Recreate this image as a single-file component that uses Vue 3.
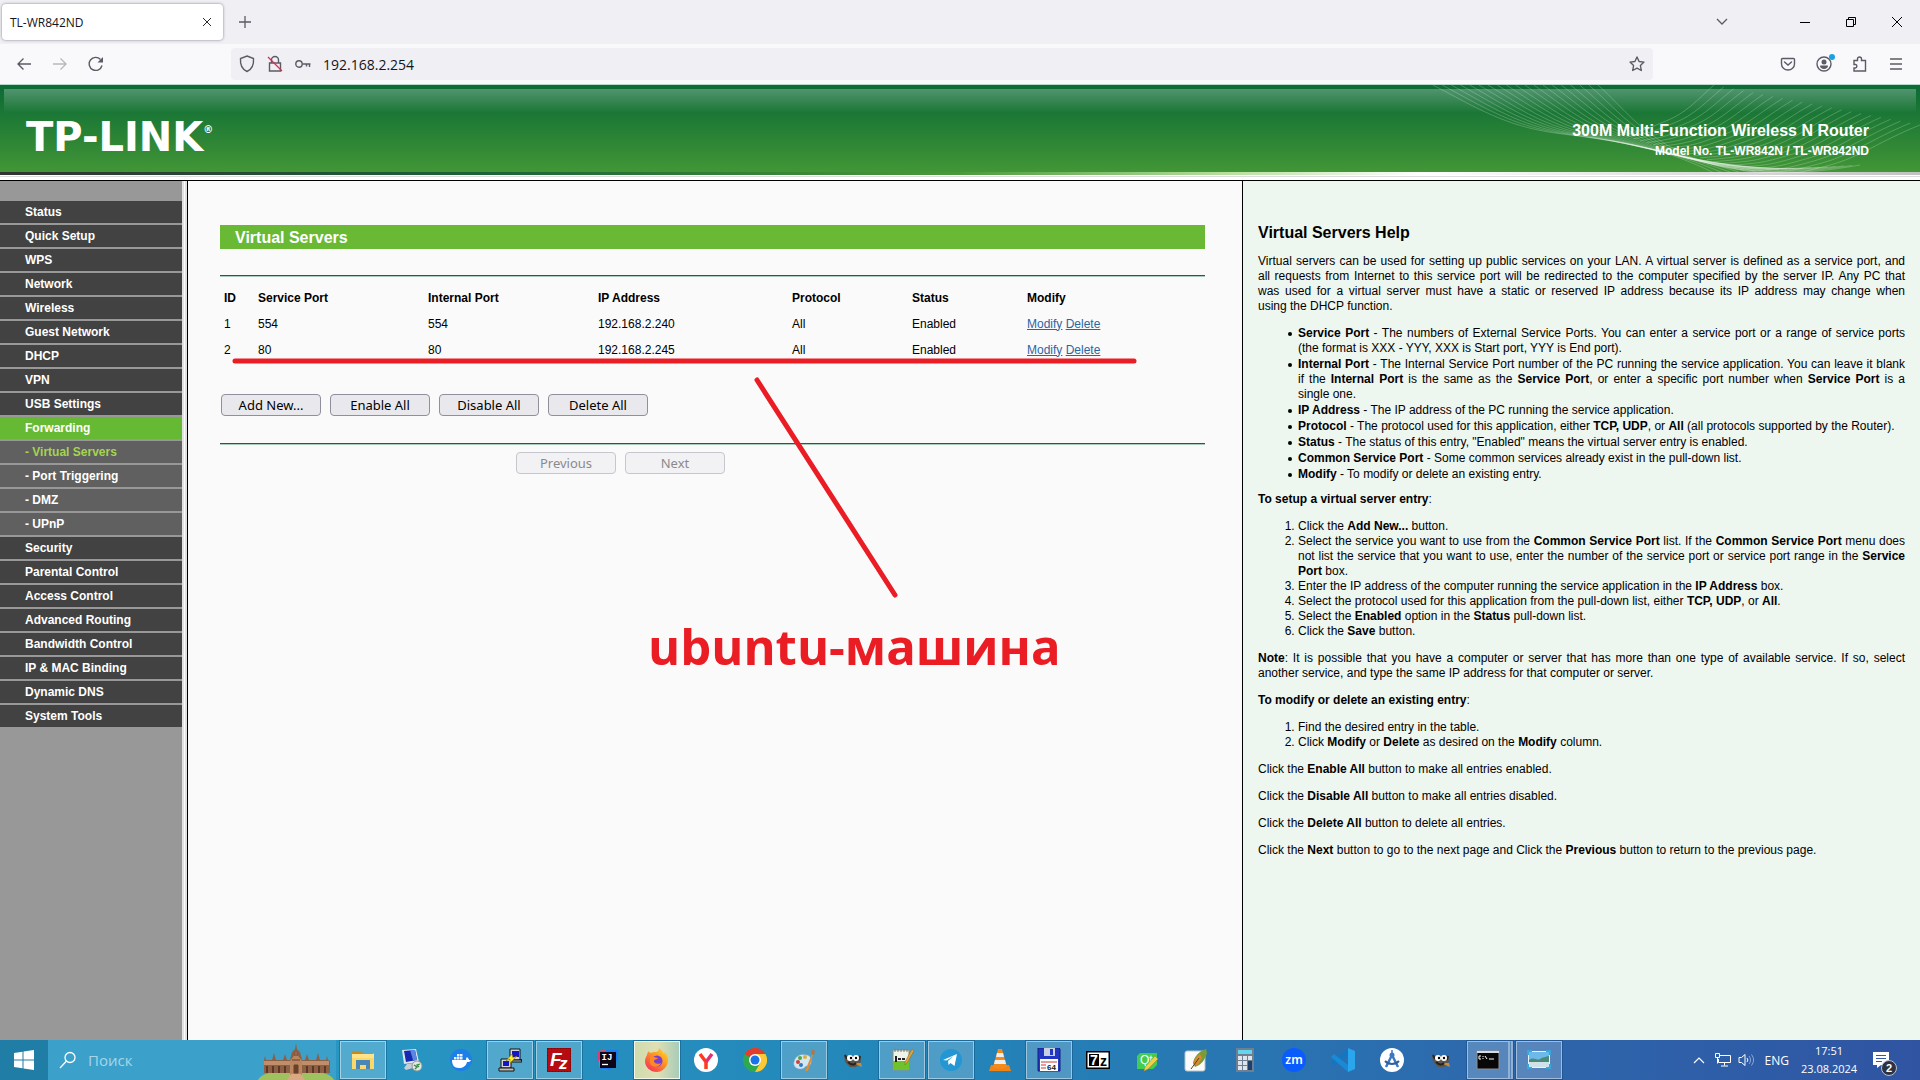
<script setup>
const menu = [
  { label: 'Status' },
  { label: 'Quick Setup' },
  { label: 'WPS' },
  { label: 'Network' },
  { label: 'Wireless' },
  { label: 'Guest Network' },
  { label: 'DHCP' },
  { label: 'VPN' },
  { label: 'USB Settings' },
  { label: 'Forwarding', kind: 'current' },
  { label: '- Virtual Servers', kind: 'sub chosen' },
  { label: '- Port Triggering', kind: 'sub' },
  { label: '- DMZ', kind: 'sub' },
  { label: '- UPnP', kind: 'sub' },
  { label: 'Security' },
  { label: 'Parental Control' },
  { label: 'Access Control' },
  { label: 'Advanced Routing' },
  { label: 'Bandwidth Control' },
  { label: 'IP & MAC Binding' },
  { label: 'Dynamic DNS' },
  { label: 'System Tools' },
]

const servers = [
  { id: 1, service: '554', internal: '554', ip: '192.168.2.240', protocol: 'All', status: 'Enabled' },
  { id: 2, service: '80', internal: '80', ip: '192.168.2.245', protocol: 'All', status: 'Enabled' },
]

// Thin wave lines in the banner, in the coordinates of a 490 x 88 drawing.
const mix = (a, b, t) => Math.round((a + (b - a) * t) * 10) / 10
function family(from, to, count) {
  const lines = []
  for (let i = 0; i < count; i++) {
    const t = i / (count - 1)
    const p = from.map((v, k) => mix(v, to[k], t))
    lines.push(`M${p[0]} ${p[1]}C${p[2]} ${p[3]} ${p[4]} ${p[5]} ${p[6]} ${p[7]}S${p[8]} ${p[9]} ${p[10]} ${p[11]}`)
  }
  return lines
}
const waves = [
  ...family(
    [3, 0, 45, 22, 75, 41, 125, 48, 225, 58, 284, 88],
    [168, 0, 190, 20, 200, 34, 222, 50, 300, 104, 430, 80],
    19,
  ),
  ...family(
    [284, 0, 266, 16, 256, 28, 236, 36, 215, 46, 190, 50],
    [490, 40, 450, 56, 430, 72, 400, 80, 370, 88, 330, 90],
    22,
  ),
]

const gimp =
  '<path d="M3 6l3 3 3-2 5 2 5-2 1 7-5 5H9l-5-5z" fill="#5f574c"/><path d="M4 7l2 4M19 8l-1 4" stroke="#2b2722" stroke-width="2"/><circle cx="9" cy="10" r="3" fill="#fff"/><circle cx="15" cy="10" r="3" fill="#fff"/><circle cx="10" cy="10" r="1.2"/><circle cx="15" cy="10" r="1.2"/><path d="M12 15l9 4-1-4z" fill="#c98b3c"/><path d="M7 14c3 3 6 3 8 1" stroke="#26221e" fill="none" stroke-width="2"/>'

const apps = [
  { name: 'File Explorer', open: true, art: '<path d="M1 3h9l2 2v3H1z" fill="#c78a1c"/><path d="M1 6h21l1-1v16H1z" fill="#f9d86c"/><path d="M1 6h22v4H1z" fill="#ffe38c"/><path d="M5 21v-9h14v9h-4v-4H9v4z" fill="#4b86b5"/>' },
  { name: 'Remote Desktop', art: '<path d="M2 2l14-1 3 13-15 2z" fill="#dfe4ea"/><path d="M4 3l11-1 2 10-11 2z" fill="#1428b4"/><path d="M10 2l5 0 2 10-4 0z" fill="#5a86e0"/><path d="M7 16l7-1 2 4-10 3-2-2z" fill="#c9ced4"/><circle cx="17" cy="18" r="5" fill="#e4e6e5" stroke="#8f9794"/><path d="M14 17l3 2-2 2M20 16l-3 1 2 2" stroke="#2d8b3e" stroke-width="1.300" fill="none"/>' },
  { name: 'Docker', art: '<circle cx="12" cy="12" r="11" fill="#1d7fe8"/><path d="M3 12h14c0-1 0-2 1-3 1 1 2 2 2 3h2c-1 2-2 2-4 2-1 4-4 6-8 6-5 0-7-3-7-8z" fill="#fff"/><path d="M5 9h2.500v2.500H5zM8 9h2.500v2.500H8zM11 9h2.500v2.500H11zM8 6h2.500v2.500H8zM11 6h2.500v2.500H11z" fill="#e8f2ff"/>' },
  { name: 'PuTTY', open: true, art: '<path d="M12 1h10v11H12z" fill="#d5d5d5" stroke="#111"/><path d="M14 3h7v6h-7z" fill="#1414c8"/><path d="M3 11h10v9H3z" fill="#d5d5d5" stroke="#111"/><path d="M5 13h6v5H5z" fill="#1414c8"/><path d="M1 20h15v3H1zM13 12h10v-1l1 3H14z" fill="#bdbdbd" stroke="#111"/><path d="M8 13l6-7 1 4 4-2-7 7 0-4z" fill="#ffee22" stroke="#8c7b00" stroke-width=".5"/>' },
  { name: 'FileZilla', open: true, art: '<path d="M0 0h24v24H0z" fill="#b60c10"/><path d="M.5 .5h23v23H.5z" fill="none" stroke="#7a0508" stroke-dasharray="2 1"/><text x="3" y="18" font-family="Liberation Sans" font-weight="700" font-style="italic" font-size="19" fill="#fff">F</text><text x="12" y="21" font-family="Liberation Sans" font-weight="700" font-style="italic" font-size="17" fill="#fff">z</text>' },
  { name: 'IntelliJ IDEA', art: '<path d="M2 3l9-1 1 20-8-1z" fill="#fb7a24"/><path d="M2 14l0-11 10-1z" fill="#d83b7c"/><path d="M10 2h12v10L14 22 4 21z" fill="#177cf5"/><path d="M4 4h16v16H4z" fill="#0d0616"/><text x="5.500" y="12" font-family="Liberation Mono" font-weight="700" font-size="9" fill="#fff">IJ</text><path d="M6 16.500h6" stroke="#fff" stroke-width="1.300"/>' },
  { name: 'Firefox', open: true, active: true, art: '<defs><linearGradient id="fx" x1="1" y1="0" x2="0.200" y2="1"><stop offset="0" stop-color="#ffe03a"/><stop offset=".45" stop-color="#ff9a1f"/><stop offset="1" stop-color="#f5305a"/></linearGradient></defs><path d="M2 7c0-1 1-3 2-4 0 1 1 2 2 2 1-1 3-1 4-1 2 0 4-1 4-4 3 2 4 4 5 6l1-2c3 4 4 8 2 13-2 4-6 7-10 7C5 24 0 19 0 13c0-2 1-4 2-6z" fill="url(#fx)"/><circle cx="12" cy="13" r="5.500" fill="#7b3fd0"/><path d="M5 9c4-1 6 1 8 1-1 2-4 1-4 3s3 4 7 2c-2 5-9 5-11 0z" fill="#ff8a24"/>' },
  { name: 'Yandex Browser', art: '<circle cx="12" cy="12" r="12" fill="#fff"/><path d="M6 6l6 8M12 21v-7" stroke="#ff3a1f" stroke-width="3.500" fill="none"/><path d="M18 6l-6 8" stroke="#e3306e" stroke-width="3.500"/>' },
  { name: 'Chrome', art: '<circle cx="12" cy="12" r="12" fill="#2da94f"/><path d="M12 12L1.600 6A12 12 0 0 1 22.400 6z" fill="#e33b2e"/><path d="M12 6h10.400A12 12 0 0 1 12 24l5.200-9z" fill="#fcc934"/><circle cx="12" cy="12" r="6" fill="#fff"/><circle cx="12" cy="12" r="4.500" fill="#1a73e8"/>' },
  { name: 'Paint', open: true, art: '<path d="M2 14C3 8 9 5 15 7c4 1 5 5 4 8-1 4-4 2-6 4-1 2-4 2-6 2-4-1-6-4-5-7z" fill="#d4e6f1" stroke="#88aabf" stroke-width=".5"/><circle cx="6" cy="14" r="2" fill="#c8453a"/><circle cx="8" cy="10" r="2" fill="#52a64b"/><circle cx="13" cy="9" r="2" fill="#d7b13c"/><circle cx="9" cy="17" r="2" fill="#2f7bc8"/><path d="M20 6l1 1-5 16h-3z" fill="#dc8d35"/><path d="M19 6l1-5 3 2-1 4z" fill="#b5773c"/>' },
  { name: 'GIMP', art: gimp },
  { name: 'Notepad++', open: true, art: '<path d="M3 2h16v20H3z" fill="#eef3e8" stroke="#87917c"/><path d="M3 13h16v9H3z" fill="#6ec22c"/><path d="M5 1v3M8 1v3M11 1v3M14 1v3M17 1v3" stroke="#777"/><path d="M6 8v6M8 11h3M12 11h3" stroke="#222" stroke-width="2"/><path d="M22 1l2 2-7 12-2 2 0-3z" fill="#e1a33b" stroke="#8c6221" stroke-width=".5"/>' },
  { name: 'Telegram', open: true, art: '<circle cx="12" cy="12" r="11" fill="#2297d4"/><path d="M4 12l14-6-2.500 12-4-3-2 2-.5-4 5.500-5-7 4.500z" fill="#fff"/>' },
  { name: 'VLC', art: '<path d="M3 17h18l2 6H1z" fill="#f08316"/><path d="M10 1h4l5 18c-3 2-11 2-14 0z" fill="#f38a1b"/><path d="M9 5h6l1 4H8zM7 12h10l1 4H6z" fill="#eef0f0"/>' },
  { name: 'Double Commander', open: true, art: '<path d="M1 0h21l1 1v22H1z" fill="#2236c4" stroke="#15217c"/><path d="M7 0h11v8H7z" fill="#c8d0e4"/><path d="M13 1h3v6h-3z" fill="#2236c4"/><path d="M3 11h18v12H3z" fill="#fff"/><path d="M4 14h16M4 17h5M4 20h5" stroke="#c53a3a"/><text x="10" y="22" font-family="Liberation Sans" font-weight="700" font-size="8" fill="#222">64</text>' },
  { name: '7-Zip', art: '<path d="M0 3h24v18H0z" fill="#000"/><path d="M1.500 4.500h21v15h-21z" fill="#fff"/><path d="M3 6h10v12H3z" fill="#000"/><text x="4" y="17" font-family="Liberation Sans" font-weight="700" font-size="14" fill="#fff">7</text><text x="14" y="18" font-family="Liberation Sans" font-weight="700" font-size="14" fill="#000">z</text>' },
  { name: 'Qt Designer', art: '<path d="M5 5h17v12l-4 4H2V8z" fill="#41cd52"/><text x="5" y="16" font-family="Liberation Sans" font-size="12" fill="#fff">Qt</text><path d="M20 8l3 3-10 10-4 2 1-4z" fill="#f2cf48" stroke="#a5852a" stroke-width=".5"/>' },
  { name: 'Notes', art: '<rect x="1" y="3" width="20" height="20" rx="2" fill="#fbfbfb" stroke="#b7c4cc"/><path d="M22 1c-7 2-12 8-13 14l2 4c6-2 10-7 12-14z" fill="#7b9c35"/><path d="M10 15c0-4 3-7 6-9l2 4-5 8z" fill="#d98a33"/><path d="M7 21l8-11" stroke="#5a3d1c"/>' },
  { name: 'Calculator', art: '<path d="M3 0h18v24H3z" fill="#6d7f90"/><path d="M5 2h14v4H5z" fill="#64d5ee"/><path d="M5 8h4v4H5zM10 8h4v4h-4zM15 8h4v4h-4zM5 13h4v4H5zM10 13h4v4h-4zM5 18h4v4H5zM10 18h4v4h-4z" fill="#dfe5ea"/><path d="M15 13h4v9h-4z" fill="#1d3f6e"/>' },
  { name: 'Zoom', art: '<circle cx="12" cy="12" r="12" fill="#0b5cff"/><text x="12" y="16" text-anchor="middle" font-family="Noto Sans" font-weight="600" font-size="12" fill="#fff">zm</text>' },
  { name: 'Visual Studio Code', art: '<path d="M17 0l7 3v18l-7 3z" fill="#2aa6ee"/><path d="M17 0v7L3 18l-3-3z" fill="#1277c0"/><path d="M17 24v-7L3 6 0 9z" fill="#1a8ad6"/>' },
  { name: 'Android Studio', art: '<circle cx="12" cy="12" r="12" fill="#fff"/><path d="M12 7L6 19M12 7l6 12" stroke="#3b78c4" stroke-width="2.500"/><path d="M5 13c4 4 10 4 14 0" stroke="#2f5f9e" stroke-width="2" fill="none"/><circle cx="12" cy="7" r="2.500" fill="#3b78c4"/><path d="M12 2v4" stroke="#3b78c4" stroke-width="1.500"/>' },
  { name: 'GIMP 2', art: gimp },
  { name: 'Command Prompt', open: true, stacked: true, art: '<path d="M1 3h22v18H1z" fill="#080808" stroke="#8c9094"/><path d="M1 3h22v2H1z" fill="#d8dcdf"/><path d="M5 8H3v3h2M7 8v1M7 10v1M9 8l2 3M13 11h5" stroke="#fff" fill="none"/>' },
  { name: 'Picture Viewer', open: true, art: '<path d="M1 3h22v17H1z" fill="#e7f3fb"/><path d="M2 4h20v8H2z" fill="#6db9ea"/><path d="M2 12c5-4 8 1 11-1s6-2 9-3v6H2z" fill="#4a8a78"/><path d="M2 14h20v5H2z" fill="#cfe2ea"/><path d="M1 7V3h4M19 3h4v4M23 16v4h-4M5 20H1v-4" stroke="#38a7e0" stroke-width="2" fill="none"/>' },
]
</script>

<template>
  <div class="screen">
    <header class="tabs">
      <div class="tab">
        <span>TL-WR842ND</span>
        <button class="plain tab-close" aria-label="Close tab">
          <svg width="10" height="10" viewBox="0 0 10 10"><path d="M1 1l8 8M9 1l-8 8" stroke="#2b2a33" /></svg>
        </button>
      </div>
      <button class="plain new-tab" aria-label="New tab">
        <svg width="12" height="12" viewBox="0 0 12 12"><path d="M6 0v12M0 6h12" stroke="#5b5b66" stroke-width="1.300" /></svg>
      </button>
      <button class="plain list-tabs" aria-label="List all tabs">
        <svg width="12" height="8" viewBox="0 0 12 8"><path d="M1 1l5 5 5-5" stroke="#5b5b66" stroke-width="1.300" fill="none" /></svg>
      </button>
      <div class="window-controls">
        <button class="plain" aria-label="Minimize">
          <svg width="10" height="10" viewBox="0 0 10 10"><path d="M0 5.500h10" stroke="#000" /></svg>
        </button>
        <button class="plain" aria-label="Restore">
          <svg width="10" height="10" viewBox="0 0 10 10"><path d="M.5 2.500h7v7h-7zM2.500 2.500v-2h7v7h-2" stroke="#000" fill="none" /></svg>
        </button>
        <button class="plain" aria-label="Close">
          <svg width="10" height="10" viewBox="0 0 10 10"><path d="M0 0l10 10M10 0L0 10" stroke="#000" /></svg>
        </button>
      </div>
    </header>

    <nav class="toolbar">
      <button class="plain tool" aria-label="Back">
        <svg width="16" height="16" viewBox="0 0 16 16"><path d="M15 8H2M7.500 2.500L2 8l5.500 5.500" class="line" /></svg>
      </button>
      <button class="plain tool faded" aria-label="Forward" disabled>
        <svg width="16" height="16" viewBox="0 0 16 16"><path d="M1 8h13M8.500 2.500L14 8l-5.500 5.500" class="line" /></svg>
      </button>
      <button class="plain tool" aria-label="Reload">
        <svg width="16" height="16" viewBox="0 0 16 16"><path d="M14 9.500A6.500 6.500 0 1 1 12.500 3.500" class="line" /><path d="M15 1v5.500h-5.500z" fill="#5b5b66" /></svg>
      </button>
      <div class="address">
        <svg width="16" height="18" viewBox="0 0 16 18"><path d="M8 1l6.500 2.500C15 10 12.500 14.500 8 16.500 3.500 14.500 1 10 1.500 3.500z" class="line" /></svg>
        <svg width="16" height="18" viewBox="0 0 16 18">
          <path d="M2.500 8h11v8h-11zM4.500 8V5a3.500 3.500 0 0 1 7 0v3" class="line" /><path d="M1 2l14 14" stroke="#e22850" stroke-width="1.300" />
        </svg>
        <svg width="16" height="10" viewBox="0 0 16 10"><circle cx="4" cy="5" r="3.200" class="line" /><path d="M7.500 5H15.500M11.500 5v2.500M14.500 5v3" class="line" /></svg>
        <input type="text" value="192.168.2.254" aria-label="Address" />
        <button class="plain star" aria-label="Bookmark">
          <svg width="16" height="16" viewBox="0 0 16 16"><path d="M8 1l2.100 4.500 4.900.6-3.600 3.400.9 5L8 12.100 3.700 14.500l.9-5L1 6.100l4.900-.6z" class="line" stroke-linejoin="round" /></svg>
        </button>
      </div>
      <button class="plain tool" aria-label="Save to Pocket">
        <svg width="16" height="16" viewBox="0 0 16 16"><path d="M2.500 2.500h11a1 1 0 0 1 1 1V8a6.500 6 0 0 1-13 0V3.500a1 1 0 0 1 1-1zM4.500 6L8 9l3.500-3" class="line" stroke-linecap="round" /></svg>
      </button>
      <button class="plain tool account" aria-label="Account">
        <svg width="16" height="16" viewBox="0 0 16 16"><circle cx="8" cy="8" r="7" class="line" /><circle cx="8" cy="6" r="2.500" fill="#5b5b66" /><path d="M4 9.500h8c0 2-1.500 3.500-4 3.500S4 11.500 4 9.500z" fill="#5b5b66" /></svg>
        <i class="dot"></i>
      </button>
      <button class="plain tool" aria-label="Extensions">
        <svg width="16" height="16" viewBox="0 0 16 16"><path d="M2 6.500V4.500h3.500V3a2 2 0 0 1 4 0v1.500h4V15H2v-3h1.500a1.800 1.800 0 0 0 0-3.500H2z" class="line" /></svg>
      </button>
      <button class="plain tool" aria-label="Menu">
        <svg width="14" height="12" viewBox="0 0 14 12"><path d="M1 1h12M1 6h12M1 11h12" class="line" /></svg>
      </button>
    </nav>

    <div class="banner">
      <svg class="waves" width="490" height="88" viewBox="0 0 490 88"><path v-for="(d, i) in waves" :key="i" :d="d" /></svg>
      <div class="logo">TP-LINK<sup>®</sup></div>
      <div class="model">
        <h1>300M Multi-Function Wireless N Router</h1>
        <p>Model No. TL-WR842N / TL-WR842ND</p>
      </div>
    </div>
    <div class="banner-edge"></div>

    <div class="frames">
      <nav class="side">
        <ul>
          <li v-for="m in menu" :key="m.label" :class="m.kind"><a href="#">{{ m.label }}</a></li>
        </ul>
      </nav>

      <main class="panel">
        <h2>Virtual Servers</h2>
        <section class="list">
          <table>
            <colgroup>
              <col class="c-id" /><col class="c-port" /><col class="c-port" /><col class="c-ip" /><col class="c-proto" /><col class="c-status" /><col />
            </colgroup>
            <thead>
              <tr><th>ID</th><th>Service Port</th><th>Internal Port</th><th>IP Address</th><th>Protocol</th><th>Status</th><th>Modify</th></tr>
            </thead>
            <tbody>
              <tr v-for="s in servers" :key="s.id">
                <td>{{ s.id }}</td><td>{{ s.service }}</td><td>{{ s.internal }}</td><td>{{ s.ip }}</td><td>{{ s.protocol }}</td><td>{{ s.status }}</td>
                <td><a href="#">Modify</a>&nbsp;<a href="#">Delete</a></td>
              </tr>
            </tbody>
          </table>
          <div class="actions">
            <button>Add New...</button>
            <button>Enable All</button>
            <button>Disable All</button>
            <button>Delete All</button>
          </div>
        </section>
        <div class="pager">
          <button disabled>Previous</button>
          <button disabled>Next</button>
        </div>

        <svg class="marks" width="980" height="440" viewBox="0 0 980 440">
          <path d="M47 180H946M569 199L707 414" />
        </svg>
        <p class="note">ubuntu-машина</p>
      </main>

      <aside class="help">
        <h3>Virtual Servers Help</h3>
        <p>Virtual servers can be used for setting up public services on your LAN. A virtual server is defined as a service port, and all&nbsp;requests from Internet to this service port will be redirected to the computer specified by the server IP. Any PC that was&nbsp;used for a virtual server must have a static or reserved IP address because its IP address may change when using&nbsp;the&nbsp;DHCP function.</p>
        <ul>
          <li><b>Service Port</b> - The numbers of External Service Ports. You can enter a service port or a range of service ports (the format is XXX - YYY, XXX is Start port, YYY is End port).</li>
          <li><b>Internal Port</b> - The Internal Service Port number of the PC running the service application. You can leave it blank if the <b>Internal Port</b> is the same as the <b>Service Port</b>, or enter a specific port number when <b>Service Port</b> is a single&nbsp;one.</li>
          <li><b>IP Address</b> - The IP address of the PC running the service application.</li>
          <li><b>Protocol</b> - The protocol used for this application, either <b>TCP, UDP</b>, or <b>All</b> (all protocols supported by the Router).</li>
          <li><b>Status</b> - The status of this entry, "Enabled" means the virtual server entry is enabled.</li>
          <li><b>Common Service Port</b> - Some common services already exist in the pull-down list.</li>
          <li><b>Modify</b> - To modify or delete an existing entry.</li>
        </ul>
        <p><b>To setup a virtual server entry</b>:</p>
        <ol>
          <li>Click the <b>Add New...</b> button.</li>
          <li>Select the service you want to use from the <b>Common Service Port</b> list. If the <b>Common Service Port</b> menu does not list the service that you want to use, enter the number of the service port or service port range in the <b>Service Port</b> box.</li>
          <li>Enter the IP address of the computer running the service application in the <b>IP Address</b> box.</li>
          <li>Select the protocol used for this application from the pull-down list, either <b>TCP, UDP</b>, or <b>All</b>.</li>
          <li>Select the <b>Enabled</b> option in the <b>Status</b> pull-down list.</li>
          <li>Click the <b>Save</b> button.</li>
        </ol>
        <p><b>Note</b>: It is possible that you have a computer or server that has more than one type of available service. If so, select another service, and type the same IP address for that computer or server.</p>
        <p><b>To modify or delete an existing entry</b>:</p>
        <ol>
          <li>Find the desired entry in the table.</li>
          <li>Click <b>Modify</b> or <b>Delete</b> as desired on the <b>Modify</b> column.</li>
        </ol>
        <p>Click the <b>Enable All</b> button to make all entries enabled.</p>
        <p>Click the <b>Disable All</b> button to make all entries disabled.</p>
        <p>Click the <b>Delete All</b> button to delete all entries.</p>
        <p>Click the <b>Next</b> button to go to the next page and Click the <b>Previous</b> button to return to the previous page.</p>
      </aside>
    </div>

    <footer class="taskbar">
      <button class="plain start" aria-label="Start">
        <svg width="20" height="20" viewBox="0 0 20 20"><path d="M0 3l8.500-1.300v7.800H0zM9.500 1.500L20 0v9.500H9.500zM0 10.500h8.500v7.800L0 17zM9.500 10.500H20V20L9.500 18.500z" fill="#fff" /></svg>
      </button>
      <div class="search">
        <svg width="18" height="18" viewBox="0 0 18 18"><circle cx="11" cy="6.500" r="5" stroke="#fff" stroke-width="1.300" fill="none" /><path d="M7.500 10L1 17" stroke="#fff" stroke-width="1.300" /></svg>
        <input type="text" placeholder="Поиск" aria-label="Поиск" />
        <svg class="palace" width="78" height="38" viewBox="0 0 78 38">
          <path d="M1 38c3-6 12-9 38-9s35 3 38 9z" fill="#9fc25e" />
          <path d="M7 31V18l1-4 1 4h6l2-7 2 7h7l2-6 2 6h3l2-8 3-3 1-6 1 6 3 3 2 8h3l2-6 2 6h7l2-7 2 7h6l1-4 1 4 2 1v12z" fill="#8d6045" />
          <path d="M7 19h26v4H7zM45 19h27v4H45z" fill="#c08e68" />
          <path d="M10 24v7M16 24v7M22 24v7M28 24v7M50 24v7M56 24v7M62 24v7M68 24v7" stroke="#5c3726" stroke-width="2" />
          <path d="M33 34V19l6-8 6 8v15z" fill="#b98660" />
          <path d="M37 31v-8h4v8zM35 18h8M37 13h4" fill="#6a4029" stroke="#6a4029" />
          <path d="M30 38l4-6h10l4 6z" fill="#d9a983" />
        </svg>
      </div>
      <div class="apps">
        <button v-for="a in apps" :key="a.name" class="plain app" :class="{ open: a.open, active: a.active, stacked: a.stacked }" :aria-label="a.name">
          <svg width="24" height="24" viewBox="0 0 24 24" v-html="a.art"></svg>
        </button>
      </div>
      <div class="tray">
        <svg width="12" height="8" viewBox="0 0 12 8"><path d="M1 7l5-5 5 5" stroke="#fff" stroke-width="1.200" fill="none" /></svg>
        <svg width="18" height="16" viewBox="0 0 18 16"><path d="M6 3.500h10.500v7H4.500V7M10.500 10.500v3M7 14h7M1.500 1.500h4v4h-4zM3.500 5.500v6" stroke="#fff" fill="none" /></svg>
        <svg width="18" height="14" viewBox="0 0 18 14"><path d="M1 4.500h2.500L7 1.500v11L3.500 9.500H1z" stroke="#fff" fill="none" /><path d="M9 5a3 3 0 0 1 0 4" stroke="#fff" fill="none" /><path d="M11 3a6 6 0 0 1 0 8M13.500 1.500a9 9 0 0 1 0 11" stroke="#8fa6d4" fill="none" /></svg>
        <span class="lang">ENG</span>
        <span class="clock">17:51<br />23.08.2024</span>
        <button class="plain notices" aria-label="Notifications">
          <svg width="16" height="16" viewBox="0 0 16 16"><path d="M0 0h16v13H8l-4 3v-3H0z" fill="#fff" /><path d="M3 3.500h10M3 6.500h10M3 9.500h6" stroke="#3358a4" /></svg>
          <b>2</b>
        </button>
      </div>
    </footer>
  </div>
</template>

<style>
body {
  margin: 0;
  background: #fafafa;
}
</style>

<style scoped>
.screen {
  display: flex;
  flex-direction: column;
  min-height: 100vh;
  font-family: "Liberation Sans", Arial, sans-serif;
  font-size: 12px;
  line-height: 15px;
  color: #000;
}
.plain {
  display: flex;
  align-items: center;
  justify-content: center;
  padding: 0;
  border: 0;
  background: none;
}
.line {
  fill: none;
  stroke: #5b5b66;
  stroke-width: 1.4;
}

/* Browser window */
.tabs {
  display: flex;
  align-items: center;
  height: 44px;
  background: #f0eff4;
  font-family: "Open Sans", "Noto Sans", sans-serif;
}
.tab {
  display: flex;
  align-items: center;
  justify-content: space-between;
  box-sizing: border-box;
  width: 221px;
  height: 36px;
  margin-left: 2px;
  padding: 0 11px 0 8px;
  border-radius: 4px;
  background: #fff;
  box-shadow: 0 0 3px #80808e;
  color: #15141a;
}
.new-tab {
  width: 32px;
  height: 32px;
  margin-left: 6px;
}
.list-tabs {
  width: 32px;
  height: 32px;
  margin-left: auto;
  margin-right: 44px;
}
.window-controls {
  display: flex;
}
.window-controls button {
  width: 46px;
  height: 44px;
}
.toolbar {
  display: flex;
  align-items: center;
  height: 40px;
  padding: 0 6px;
  background: #f9f9fb;
}
.tool {
  width: 36px;
  height: 32px;
}
.faded {
  opacity: 0.4;
}
.address {
  display: flex;
  flex: 1;
  align-items: center;
  gap: 12px;
  box-sizing: border-box;
  height: 32px;
  margin: 0 117px;
  padding: 0 8px;
  border-radius: 4px;
  background: #f0f0f4;
}
.address input {
  flex: 1;
  min-width: 0;
  padding: 0;
  border: 0;
  background: none;
  font: 14px "Open Sans", "Noto Sans", sans-serif;
  color: #15141a;
}
.account {
  position: relative;
}
.dot {
  position: absolute;
  top: 6px;
  right: 7px;
  width: 6px;
  height: 6px;
  border-radius: 50%;
  background: #1ba1e2;
}

/* Router banner */
.banner {
  position: relative;
  display: flex;
  align-items: flex-start;
  justify-content: space-between;
  box-sizing: border-box;
  height: 88px;
  padding: 32px 51px 0 26px;
  border-top: 1px solid #b9d9c8;
  background:
    linear-gradient(rgba(255, 255, 255, 0.28), rgba(255, 255, 255, 0)) 4px 4px / calc(100% - 8px) 24px no-repeat,
    linear-gradient(#0c6b35 0, #0f6c36 4px, #1c7835 30px, #429636 100%);
  color: #fff;
}
.waves {
  position: absolute;
  top: 0;
  right: 0;
  fill: none;
  stroke: #fff;
  stroke-opacity: 0.22;
}
.logo {
  font: 700 40px/40px "DejaVu Sans", sans-serif;
}
.logo sup {
  font-size: 10px;
  line-height: 10px;
  vertical-align: 18px;
}
.model {
  position: relative;
  padding-top: 4px;
  text-align: right;
  font-weight: 700;
}
.model h1 {
  margin: 0;
  font-size: 16px;
  line-height: 20px;
}
.model p {
  margin: 3px 0 0;
}
.banner-edge {
  height: 8px;
  border-bottom: 1px solid #000;
  background:
    linear-gradient(90deg, #333 0, #1b6238 25%, #4a9a3a 50%, #b8dfa0 64%, #fff 74%, #c2c2c2 100%) 0 0 / 100% 3px no-repeat,
    linear-gradient(#ddd, #ddd) 0 4px / 100% 1px no-repeat,
    #fff;
}

/* Frames */
.frames {
  display: grid;
  flex: 1;
  grid-template-columns: 187px minmax(0, 1055fr) minmax(0, 678fr);
}
.side {
  padding-top: 20px;
  border-right: 5px double #e2e2e2;
  background: #989898;
  background-clip: padding-box;
}
.side ul {
  display: flex;
  flex-direction: column;
  gap: 2px;
  margin: 0;
  padding: 0;
  list-style: none;
}
.side li {
  background: #424242;
}
.side a {
  display: block;
  padding-left: 25px;
  font-weight: 700;
  line-height: 22px;
  color: #fff;
  text-decoration: none;
}
.side .current {
  background: #66b933;
}
.side .sub {
  background: #606060;
}
.side .chosen a {
  color: #a5d452;
}
.panel {
  position: relative;
  padding: 44px 37px 0 32px;
  border-left: 1px solid #000;
  background: #fafafa;
}
.panel h2 {
  box-sizing: border-box;
  height: 24px;
  margin: 0;
  padding: 2px 0 0 15px;
  background: #69b934;
  font-size: 16px;
  line-height: 22px;
  color: #fff;
}
.list {
  margin-top: 26px;
  padding: 9px 0 27px;
  border-top: 1px solid #1d6149;
  border-bottom: 1px solid #1d6149;
  box-shadow: inset 0 1px #a9cbbb, 0 1px #a9cbbb;
}
table {
  width: 100%;
  table-layout: fixed;
  border-collapse: collapse;
}
.c-id {
  width: 34px;
}
.c-port {
  width: 170px;
}
.c-ip {
  width: 194px;
}
.c-proto {
  width: 120px;
}
.c-status {
  width: 115px;
}
th,
td {
  height: 26px;
  padding: 0 4px;
  text-align: left;
}
td a {
  color: #2b65a3;
}
.actions,
.pager {
  display: flex;
  gap: 9px;
}
.actions {
  padding: 31px 1px 0;
}
.pager {
  justify-content: center;
  max-width: 801px;
  padding-top: 8px;
}
.actions button,
.pager button {
  box-sizing: border-box;
  width: 100px;
  height: 22px;
  padding: 0;
  border: 1px solid #8f8f9d;
  border-radius: 4px;
  background: #e9e9ed;
  font: 13px/20px "Noto Sans", "Open Sans", sans-serif;
  color: #000;
}
.pager button:disabled {
  border-color: #c6c6cd;
  background: #f2f2f4;
  color: #8a8a8c;
}
.marks {
  position: absolute;
  top: 0;
  left: 0;
  fill: none;
  stroke: #ea1c24;
  stroke-width: 5;
  stroke-linecap: round;
  pointer-events: none;
}
.note {
  position: absolute;
  top: 430px;
  left: 460px;
  margin: 0;
  font: 700 49px/70px "Open Sans", "Noto Sans", sans-serif;
  color: #ea1c24;
  white-space: nowrap;
}
.help {
  padding: 42px 15px 0;
  border-left: 1px solid #000;
  background: #eef6f0;
  text-align: justify;
}
.help h3 {
  margin: 0 0 11px;
  font-size: 16px;
  line-height: 20px;
}
.help p {
  margin: 0 0 12px;
}
.help ul,
.help ol {
  margin: 0 0 12px;
  padding-left: 40px;
}
.help ul {
  margin-bottom: 10px;
  list-style: none;
}
.help ul li {
  position: relative;
}
.help ul li::before {
  content: "";
  position: absolute;
  top: 6px;
  left: -10px;
  width: 4px;
  height: 4px;
  border-radius: 50%;
  background: #000;
}
.help ul li + li {
  margin-top: 1px;
}

/* Taskbar */
.taskbar {
  display: flex;
  height: 40px;
  background: linear-gradient(90deg, #2a9bc4 0, #2795c2 20%, #2384b8 50%, #2c6bae 75%, #3054a2 100%);
  font-family: "Open Sans", "Noto Sans", sans-serif;
  color: #fff;
}
.start {
  width: 48px;
  background: #207ea6;
}
.search {
  display: flex;
  align-items: center;
  width: 288px;
  background: #3ba1ca;
}
.search svg {
  flex: none;
  margin-left: 11px;
}
.search input {
  flex: 1;
  min-width: 0;
  margin-left: 11px;
  padding: 0;
  border: 0;
  background: none;
  font: 15px "Open Sans", "Noto Sans", sans-serif;
  color: #fff;
}
.search input::placeholder {
  color: #a5d6e8;
  opacity: 1;
}
.search .palace {
  align-self: flex-end;
  margin: 0 1px 0 0;
}
.apps {
  display: flex;
  gap: 3px;
  padding: 1px 0 1px 4px;
}
.app {
  box-sizing: border-box;
  width: 46px;
}
.app.open {
  border: 1px solid rgba(255, 255, 255, 0.45);
  outline: 1px solid rgba(10, 60, 110, 0.35);
  background: rgba(255, 255, 255, 0.2);
}
.app.active {
  border-color: #f4f7e4;
  background: linear-gradient(90deg, #cfdcae, #e0dfb4 50%, #a8ccb8);
}
.app.stacked {
  border-right: 5px double rgba(255, 255, 255, 0.35);
}
.tray {
  display: flex;
  align-items: center;
  margin-left: auto;
  padding-right: 23px;
}
.tray svg + svg {
  margin-left: 9px;
}
.tray svg + svg + svg {
  margin-left: 6px;
}
.lang {
  margin-left: 9px;
}
.clock {
  width: 64px;
  margin-left: 8px;
  font-size: 11px;
  line-height: 18px;
  text-align: center;
}
.notices {
  position: relative;
  margin-left: 12px;
  padding-right: 8px;
}
.notices b {
  position: absolute;
  right: 0;
  bottom: -8px;
  width: 14px;
  height: 14px;
  border: 1px solid #b9c2d4;
  border-radius: 50%;
  background: #2d3240;
  font-size: 11px;
  line-height: 14px;
  color: #fff;
}
</style>
